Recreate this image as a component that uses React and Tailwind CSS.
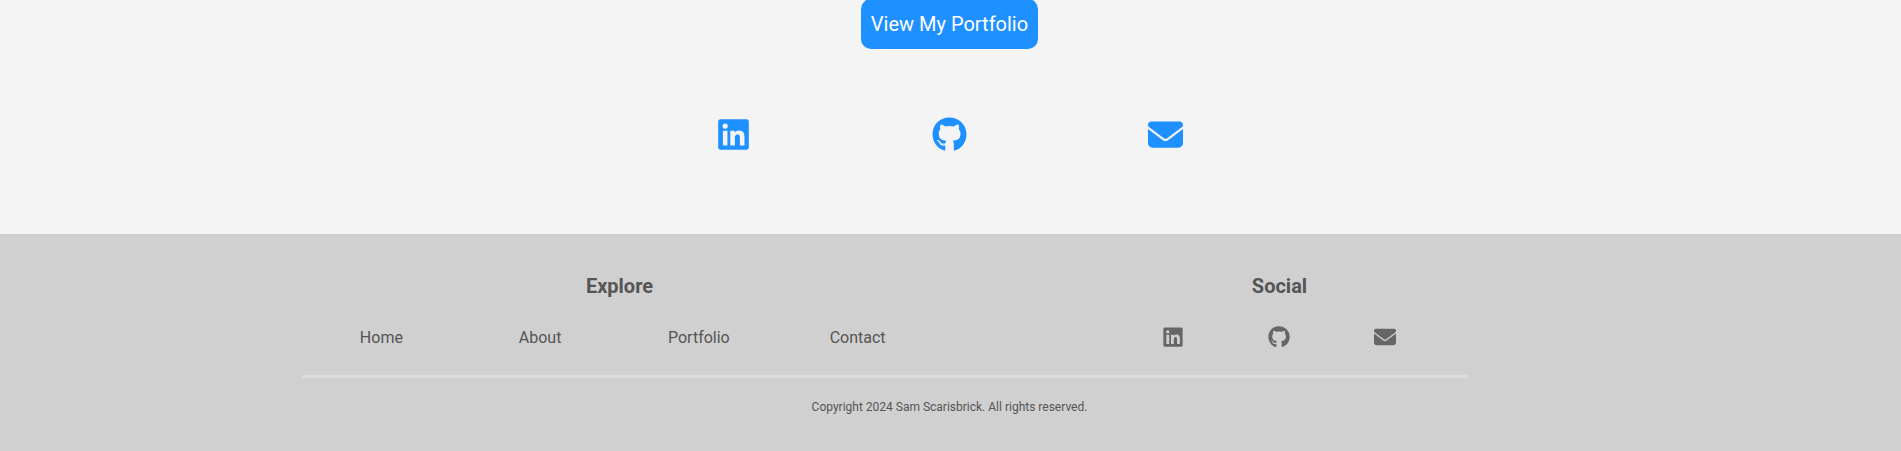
import { FaLinkedin, FaGithub } from "react-icons/fa";
import { FaEnvelope } from "react-icons/fa6";

const links = ["Home", "About", "Portfolio", "Contact"];
const icons = [FaLinkedin, FaGithub, FaEnvelope];

export default function App() {
  return (
    <div className="h-[451px] overflow-hidden bg-[#f4f4f4] font-['Roboto',sans-serif] text-[#555]">
      <main className="flex h-[234px] w-[1899px] flex-col items-center">
        <a className="-mt-px flex h-[50px] w-[177px] items-center justify-center rounded-[10px] bg-[#1e90ff] text-xl text-white">
          View My Portfolio
        </a>
        <div className="mt-[67.5px] flex w-[647px] text-[35px] text-[#1e90ff]">
          {icons.map((Icon, i) => (
            <div key={i} className="flex flex-1 justify-center"><Icon /></div>
          ))}
        </div>
      </main>
      <footer className="h-[217px] bg-[#d0d0d0]">
        <div className="ml-[302px] flex h-[144px] w-[1166px] border-b-3 border-[#dcdcdc] pt-[38px]">
          <section className="w-[635px]">
            <h2 className="text-center text-xl leading-7 font-bold">Explore</h2>
            <nav className="mt-[26px] flex">
              {links.map((name) => (
                <a key={name} className="flex-1 text-center text-base">{name}</a>
              ))}
            </nav>
          </section>
          <section className="ml-[183.5px] w-[318px]">
            <h2 className="text-center text-xl leading-7 font-bold">Social</h2>
            <div className="mt-[26px] -ml-px flex text-[22px] text-[#666]">
              {icons.map((Icon, i) => (
                <div key={i} className="flex flex-1 justify-center"><Icon /></div>
              ))}
            </div>
          </section>
        </div>
        <p className="mt-[19px] w-[1899px] text-center text-xs leading-5">Copyright 2024 Sam Scarisbrick. All rights reserved.</p>
      </footer>
    </div>
  );
}
